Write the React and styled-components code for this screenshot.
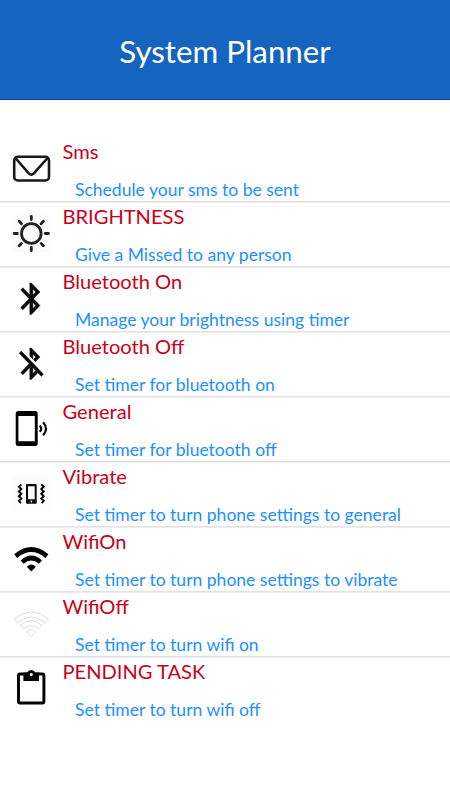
import React from "react";
import styled, { createGlobalStyle } from "styled-components";

const GlobalStyle = createGlobalStyle`
  * { box-sizing: border-box; }
  body { margin: 0; background: #fff; font-family: Lato, Carlito, sans-serif; }
`;

const Screen = styled.main`
  width: 450px;
  height: 800px;
  overflow: hidden;
  background: #fff;
`;

const Header = styled.header`
  height: 100px;
  display: flex;
  align-items: center;
  justify-content: center;
  background: #1565c0;
  border-bottom: 1px solid #0d47a1;
  padding-top: 2px;
`;

const Heading = styled.h1`
  margin: 0;
  font-size: 31.3px;
  font-weight: 400;
  line-height: 40px;
  color: #fff;
`;

const List = styled.ul`
  list-style: none;
  margin: 0;
  padding: 37px 0 0;
`;

const Row = styled.li`
  display: flex;
  height: 65px;
  border-bottom: ${(p) => (p.$last ? "none" : "1px solid #e2e2e2")};
  box-shadow: ${(p) => (p.$last ? "none" : "0 1px #ededed")};
`;

const Icon = styled.svg`
  flex: none;
  width: 62.5px;
  height: 64px;
  display: block;
`;

const Texts = styled.div`
  display: flex;
  flex-direction: column;
  white-space: nowrap;
`;

const Title = styled.span`
  flex: none;
  height: 38px;
  padding-top: 1px;
  font-size: 20.1px;
  line-height: 26px;
  color: #c9001b;
`;

const Detail = styled.span`
  flex: none;
  padding-left: 12.5px;
  font-size: 17.55px;
  line-height: 30px;
  color: #1e90ff;
`;

const ink = "#0b0b0b";

const wifiOuter = "M14.2 27.2Q31.3 12.6 48.4 27.2L45.4 30.9Q31.3 19 17.2 30.9Z";
const wifiMiddle = "M20.6 33.5Q31.3 23.6 42 33.5L38.9 36.8Q31.3 30.2 23.6 36.8Z";
const wifiDot = "M26.8 39.8Q31.3 35.4 35.8 39.8L31.3 44.4Z";

const icons = {
  mail: (
    <g fill="none" stroke="#17191c" strokeWidth="2.6" strokeLinejoin="round">
      <rect x="14.2" y="19.8" width="34.8" height="23.7" rx="3.6" />
      <path d="M15.4 21L28.8 36.4Q31.3 38.8 33.8 36.4L47.6 21" />
    </g>
  ),
  sun: (
    <g>
      <rect x="13" y="13" width="37" height="37" fill="#fcfcfc" />
      <g fill="none" stroke="#222" strokeWidth="2.8" strokeLinecap="round">
        <circle cx="31.3" cy="31.5" r="9.8" />
        <path d="M31.3 14.3v3.2M31.3 45.5v3.2M14.1 31.5h3.2M45.3 31.5h3.2M19.2 19.3l2.3 2.4M41.1 41.4l2.3 2.4M19.2 43.8l2.3-2.4M41.1 21.7l2.3-2.4" />
      </g>
    </g>
  ),
  bluetooth: (
    <path
      fill={ink}
      stroke={ink}
      strokeWidth="0.3"
      transform="translate(13.1 12.8) scale(1.52 1.58)"
      d="M17.71 7.71L12 2h-1v7.59L6.41 5 5 6.41 10.59 12 5 17.59 6.41 19 11 14.41V22h1l5.71-5.71-4.3-4.29 4.3-4.29zM13 5.83l1.88 1.88L13 9.59V5.83zm1.88 10.46L13 18.17v-3.76l1.88 1.88z"
    />
  ),
  bluetoothOff: (
    <path
      fill={ink}
      stroke={ink}
      strokeWidth="0.3"
      transform="translate(13.1 12.8) scale(1.52 1.58)"
      d="M13 5.83l1.88 1.88-1.6 1.6 1.41 1.41 3.02-3.02L12 2h-1v5.03l2 2v-3.2zM5.41 4L4 5.41 10.59 12 5 17.59 6.41 19 11 14.41V22h1l4.29-4.29 2.3 2.29L20 18.59 5.41 4zM13 18.17v-3.76l1.88 1.88L13 18.17z"
    />
  ),
  ring: (
    <g>
      <path
        fill="#000"
        fillRule="evenodd"
        d="M18.2 14H35.2Q37.7 14 37.7 16.5V46.5Q37.7 49 35.2 49H18.2Q15.7 49 15.7 46.5V16.5Q15.7 14 18.2 14ZM18.4 19V44.3H34.8V19Z"
      />
      <path d="M39.7 28.6Q42.9 31.7 39.7 34.8" fill="none" stroke="#000" strokeWidth="2.2" />
      <path d="M43.1 25.2Q48.9 31.7 43.1 38.2" fill="none" stroke="#000" strokeWidth="2.2" />
    </g>
  ),
  vibrate: (
    <g>
      <rect x="13" y="13" width="37" height="37" fill="#fcfcfc" />
      <path
        fill={ink}
        fillRule="evenodd"
        d="M27 22H35.7Q36.7 22 36.7 23V40.7Q36.7 41.7 35.7 41.7H27Q26 41.7 26 40.7V23Q26 22 27 22ZM28 24.2V37.2H34.7V24.2Z"
      />
      <circle cx="31.3" cy="39.5" r="0.9" fill="#fff" />
      <path
        d="M21.3 22.4l-2.4 2.4 2.4 2.3-2.4 2.4 2.4 2.3-2.4 2.4 2.4 2.3-2.4 2.4 2 2.2M41.3 22.4l2.4 2.4-2.4 2.3 2.4 2.4-2.4 2.3 2.4 2.4-2.4 2.3 2.4 2.4-2 2.2"
        fill="none"
        stroke={ink}
        strokeWidth="2"
      />
    </g>
  ),
  wifi: (
    <g fill="#000">
      <path d={wifiOuter} />
      <path d={wifiMiddle} />
      <path d={wifiDot} />
    </g>
  ),
  wifiOff: (
    <g fill="none" stroke="#d8cec5" strokeWidth="0.75">
      <path d={wifiOuter} />
      <path d={wifiMiddle} />
      <path d={wifiDot} />
    </g>
  ),
  clipboard: (
    <g>
      <rect x="18.5" y="17" width="25.4" height="29" rx="1.5" fill="none" stroke="#000" strokeWidth="2.9" />
      <path d="M23.4 15.5H27.4Q28.2 13 31.3 13T35.2 15.5H39V24H23.4Z" fill="#000" />
      <circle cx="31.3" cy="17.6" r="1.5" fill="#fff" />
    </g>
  ),
};

const tasks = [
  { icon: "mail", title: "Sms", detail: "Schedule your sms to be sent" },
  { icon: "sun", title: "BRIGHTNESS", detail: "Give a Missed to any person" },
  { icon: "bluetooth", title: "Bluetooth On", detail: "Manage your brightness using timer" },
  { icon: "bluetoothOff", title: "Bluetooth Off", detail: "Set timer for bluetooth on" },
  { icon: "ring", title: "General", detail: "Set timer for bluetooth off" },
  { icon: "vibrate", title: "Vibrate", detail: "Set timer to turn phone settings to general" },
  { icon: "wifi", title: "WifiOn", detail: "Set timer to turn phone settings to vibrate" },
  { icon: "wifiOff", title: "WifiOff", detail: "Set timer to turn wifi on" },
  { icon: "clipboard", title: "PENDING TASK", detail: "Set timer to turn wifi off" },
];

export default function App() {
  return (
    <>
      <GlobalStyle />
      <Screen>
        <Header>
          <Heading>System Planner</Heading>
        </Header>
        <List>
          {tasks.map((task, i) => (
            <Row key={task.icon} $last={i === tasks.length - 1}>
              <Icon viewBox="0 0 62.5 64" aria-hidden="true">{icons[task.icon]}</Icon>
              <Texts>
                <Title>{task.title}</Title>
                <Detail>{task.detail}</Detail>
              </Texts>
            </Row>
          ))}
        </List>
      </Screen>
    </>
  );
}
